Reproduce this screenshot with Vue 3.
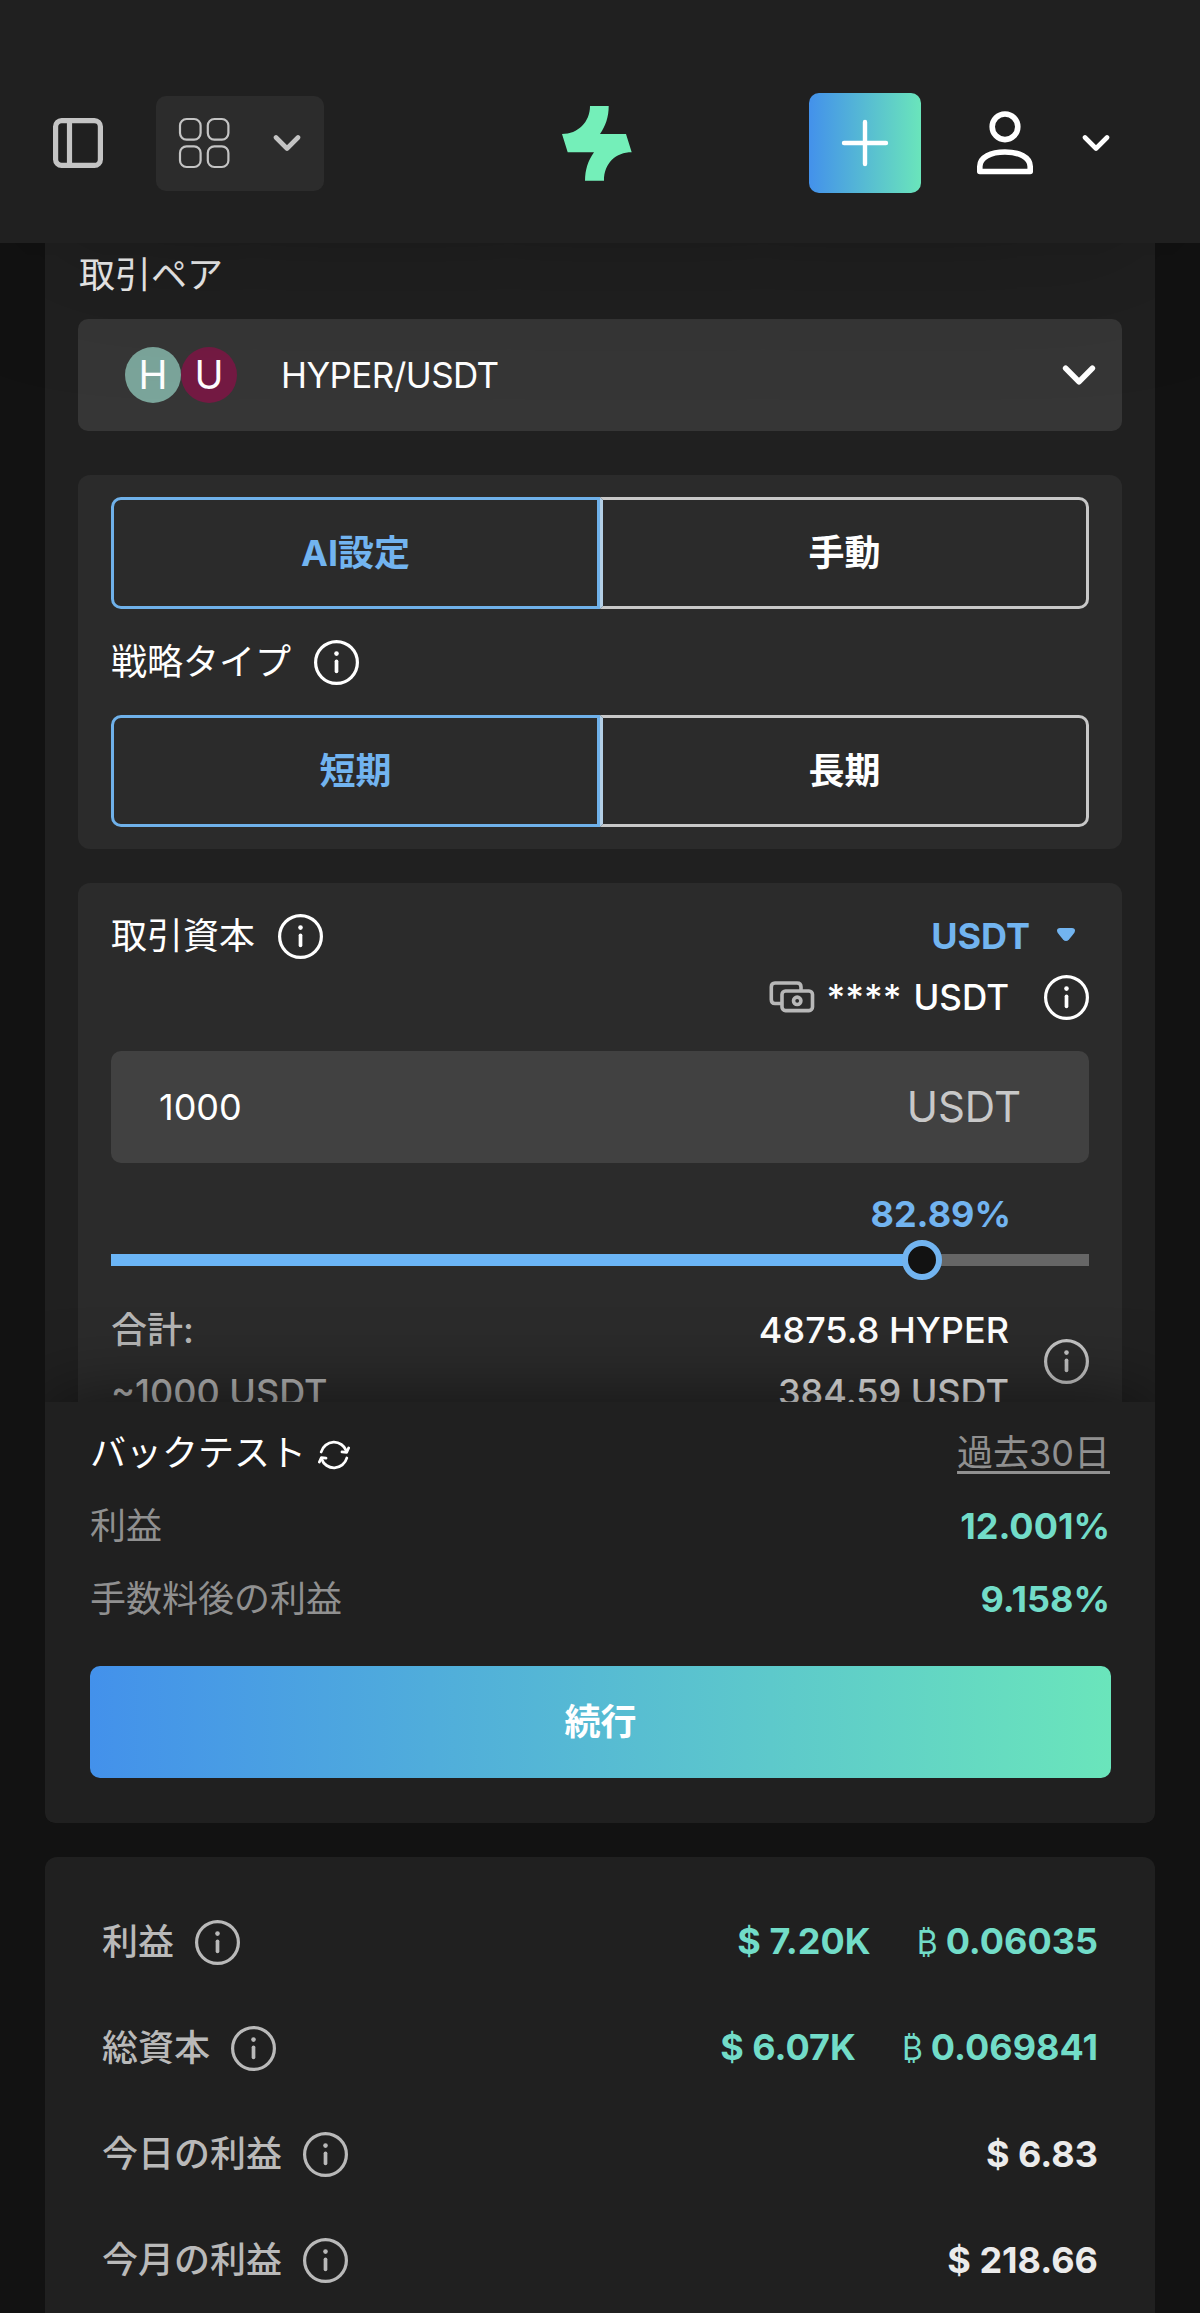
<template>
  <div class="page">
    <svg class="sprite" aria-hidden="true">
      <symbol id="info" viewBox="0 0 45 45">
        <circle cx="22.5" cy="22.5" r="20.9" fill="none" stroke="currentColor" stroke-width="3.2" />
        <circle cx="22.5" cy="13.6" r="2.3" fill="currentColor" />
        <path d="M22.5 21.3v10" fill="none" stroke="currentColor" stroke-width="3.7" stroke-linecap="round" />
      </symbol>
      <symbol id="chevron" viewBox="0 0 28 18">
        <path d="M3 3.5l11 11 11-11" fill="none" stroke="currentColor" stroke-width="4.6" stroke-linecap="round" stroke-linejoin="round" />
      </symbol>
    </svg>

    <header class="header">
      <button class="icon-button sidebar-button">
        <svg width="50" height="50" viewBox="0 0 50 50" fill="none" stroke="currentColor" stroke-width="5.2">
          <rect x="2.6" y="2.6" width="44.8" height="44.8" rx="6" />
          <path d="M16.5 3v44" />
        </svg>
      </button>
      <button class="icon-button grid-button">
        <svg width="52" height="52" viewBox="0 0 52 52" fill="none" stroke="currentColor" stroke-width="2.2">
          <rect x="2" y="2" width="20.6" height="20.6" rx="6.5" />
          <rect x="29.8" y="2" width="20.6" height="20.6" rx="6.5" />
          <rect x="2" y="29.4" width="20.6" height="20.6" rx="6.5" />
          <rect x="29.8" y="29.4" width="20.6" height="20.6" rx="6.5" />
        </svg>
        <svg class="chevron"><use href="#chevron" /></svg>
      </button>
      <svg class="logo" width="70" height="75" viewBox="0 0 70 75">
        <path fill="#74efb9" d="M28 0H46.7C46.7 11 43.6 20 38 28H64L69.7 46.3C54 46.3 42 57 42 74.7H23C23 64 26 54.500 32 46.300H5.700L0 28C16 28 28 16 28 0Z" />
      </svg>
      <button class="icon-button plus-button">
        <svg width="48" height="48" viewBox="0 0 48 48" stroke="currentColor" stroke-width="4.4" stroke-linecap="round">
          <path d="M24 3v42M3 24h42" />
        </svg>
      </button>
      <button class="icon-button user-button">
        <svg width="56" height="64" viewBox="0 0 56 64" fill="none" stroke="currentColor" stroke-width="5.600" stroke-linejoin="round">
          <circle cx="28" cy="15.8" r="12.8" />
          <path d="M2.800 60.500V55.500C2.800 46 14 41 28 41S53.200 46 53.200 55.500V60.500Z" />
        </svg>
        <svg class="chevron"><use href="#chevron" /></svg>
      </button>
    </header>

    <main class="form-card">
      <div class="form-body">
        <div class="pair-label">取引ペア</div>
        <div class="select">
          <span class="coin coin-h">H</span>
          <span class="coin coin-u">U</span>
          <span class="pair-name">HYPER/USDT</span>
          <svg class="select-arrow"><use href="#chevron" /></svg>
        </div>

        <section class="panel settings">
          <div class="toggle">
            <button v-for="mode in modes" :key="mode" :class="{ active: mode === selectedMode }" @click="selectedMode = mode">{{ mode }}</button>
          </div>
          <div class="label-row">
            <span>戦略タイプ</span>
            <svg class="info"><use href="#info" /></svg>
          </div>
          <div class="toggle">
            <button v-for="term in terms" :key="term" :class="{ active: term === selectedTerm }" @click="selectedTerm = term">{{ term }}</button>
          </div>
        </section>

        <section class="panel capital">
          <div class="capital-head">
            <span>取引資本</span>
            <svg class="info"><use href="#info" /></svg>
            <span class="currency">USDT</span>
            <svg class="caret" width="20" height="15" viewBox="0 0 20 15">
              <path d="M4 1H16Q20.500 1.500 18.200 6L13 12.500Q10 15.500 7 12.500L1.800 6Q-.5 1.500 4 1Z" fill="currentColor" />
            </svg>
          </div>
          <div class="balance">
            <svg class="cash" width="46" height="32" viewBox="0 0 46 32" fill="none" stroke="currentColor" stroke-width="3.600">
              <path d="M12 22.500H6Q2.300 22.500 2.300 18.500V6Q2.300 2 6 2H28Q32 2 32 6V9" />
              <rect x="13" y="10" width="30.500" height="19.600" rx="3.500" />
              <circle cx="28.200" cy="19.800" r="3.700" />
            </svg>
            <span class="stars">****</span>
            <span class="balance-unit">USDT</span>
            <svg class="info"><use href="#info" /></svg>
          </div>
          <div class="amount">
            <span class="amount-value">{{ amount }}</span>
            <span class="amount-unit">USDT</span>
          </div>
          <div class="percent">{{ percent }}%</div>
          <div class="slider">
            <div class="slider-fill" :style="{ width: percent + '%' }"></div>
            <div class="slider-thumb" :style="{ left: percent + '%' }"></div>
          </div>
          <div class="total">
            <div class="total-left">
              <div>合計:</div>
              <div class="total-sum">~1000 USDT</div>
            </div>
            <div class="total-right">
              <div class="total-hyper">4875.8 HYPER</div>
              <div class="total-usdt">384.59 USDT</div>
            </div>
            <svg class="info"><use href="#info" /></svg>
          </div>
        </section>
      </div>

      <footer class="backtest">
        <div class="backtest-row">
          <span class="backtest-title">バックテスト</span>
          <svg class="refresh" width="32" height="32" viewBox="0 0 32 32" fill="none" stroke="currentColor" stroke-width="2.800" stroke-linecap="round" stroke-linejoin="round">
            <path d="M3.200 13A13.200 13.200 0 0 1 28.400 12M28.800 19A13.200 13.200 0 0 1 3.600 20" />
            <path d="M24 12.800L28.700 13.300 30.600 9M8 19.200L3.300 18.700 1.400 23" />
          </svg>
          <a class="period">過去30日</a>
        </div>
        <div class="backtest-row">
          <span>利益</span>
          <b class="gain-1">12.001%</b>
        </div>
        <div class="backtest-row">
          <span>手数料後の利益</span>
          <b class="gain-2">9.158%</b>
        </div>
        <button class="continue">続行</button>
      </footer>
    </main>

    <section class="stats">
      <div v-for="row in stats" :key="row.label" class="stat">
        <span>{{ row.label }}</span>
        <svg class="info"><use href="#info" /></svg>
        <div class="stat-values" :class="{ green: row.btc }">
          <b>$ {{ row.usd }}</b>
          <b v-if="row.btc" class="btc"><i>₿</i>{{ row.btc }}</b>
        </div>
      </div>
    </section>
  </div>
</template>

<script setup>
import { ref } from 'vue';

const modes = ['AI設定', '手動'];
const terms = ['短期', '長期'];
const selectedMode = ref('AI設定');
const selectedTerm = ref('短期');

const amount = ref(1000);
const percent = ref(82.89);

const stats = [
  { label: '利益', usd: '7.20K', btc: '0.06035' },
  { label: '総資本', usd: '6.07K', btc: '0.069841' },
  { label: '今日の利益', usd: '6.83' },
  { label: '今月の利益', usd: '218.66' },
];
</script>

<style>
body {
  margin: 0;
  background: #121212;
}
</style>

<style scoped>
.page {
  width: 1200px;
  height: 2313px;
  overflow: hidden;
  background: #121212;
  color: #fff;
  font-family: Inter, "Noto Sans CJK JP", sans-serif;
  font-size: 36px;
  line-height: 54px;
}

.page * {
  box-sizing: border-box;
}

.sprite {
  display: none;
}

button {
  margin: 0;
  padding: 0;
  border: none;
  background: none;
  color: inherit;
  font: inherit;
}

svg {
  display: block;
  flex: none;
}

.info {
  width: 45px;
  height: 45px;
}

.chevron {
  width: 28px;
  height: 18px;
}

/* Header */
.header {
  position: relative;
  z-index: 2;
  display: flex;
  align-items: center;
  height: 243px;
  padding: 43px 90px 0 53px;
  background: #202020;
  box-shadow: 0 20px 160px -30px rgba(0, 0, 0, 0.3);
}

.icon-button {
  display: flex;
  align-items: center;
}

.sidebar-button {
  color: #c4c4c4;
}

.grid-button {
  justify-content: space-between;
  width: 168px;
  height: 95px;
  margin-left: 53px;
  padding: 0 23px 0 22px;
  border-radius: 10px;
  background: #2c2c2c;
  color: #c4c4c4;
}

.logo {
  margin-left: 238px;
}

.plus-button {
  justify-content: center;
  width: 112px;
  height: 100px;
  margin-left: 177px;
  border-radius: 10px;
  background: linear-gradient(90deg, #4391eb, #6ae5bb);
}

.user-button {
  gap: 49px;
  margin-left: 56px;
}

/* Form */
.form-card {
  width: 1110px;
  margin: 0 45px;
  border-radius: 0 0 10px 10px;
  background: #202020;
}

.form-body {
  height: 1159px;
  padding: 5px 33px 0;
  overflow: hidden;
}

.pair-label {
  padding-left: 1px;
  color: #f0f0f0;
}

.select {
  display: flex;
  align-items: center;
  height: 112px;
  margin-top: 17px;
  padding: 0 26px 0 47px;
  border-radius: 10px;
  background: #363636;
}

.coin {
  width: 56px;
  height: 56px;
  border-radius: 50%;
  font-size: 39px;
  line-height: 56px;
  text-align: center;
}

.coin-h {
  background: #7ba59b;
}

.coin-u {
  background: #741a43;
}

.pair-name {
  margin-left: 44px;
  font-size: 35px;
  letter-spacing: -0.6px;
}

.select-arrow {
  width: 34px;
  height: 22px;
  margin-left: auto;
}

.panel {
  border-radius: 12px;
  background: #2b2b2b;
}

.settings {
  margin-top: 44px;
  padding: 22px 33px;
}

.toggle {
  display: flex;
}

.toggle button {
  width: 489px;
  height: 112px;
  border: 3px solid #c8c8c8;
  font-weight: 700;
  line-height: 106px;
  text-align: center;
}

.toggle button:first-child {
  border-radius: 10px 0 0 10px;
}

.toggle button:last-child {
  border-left-color: #b4cfe6;
  border-radius: 0 10px 10px 0;
}

.toggle button.active {
  border-color: #6fb1ea;
  color: #72b4f0;
}

.label-row {
  display: flex;
  align-items: center;
  gap: 23px;
  height: 106px;
}

.capital {
  height: 560px;
  margin-top: 34px;
  padding: 28px 33px 0;
}

.capital-head {
  display: flex;
  align-items: center;
  height: 50px;
}

.capital-head .info {
  margin-left: 23px;
}

.currency {
  margin-left: auto;
  color: #72b4f0;
  font-weight: 700;
}

.caret {
  margin: 0 13px 4px 26px;
  color: #72b4f0;
}

.balance {
  display: flex;
  align-items: center;
  justify-content: flex-end;
  height: 50px;
  margin-top: 11px;
}

.cash {
  color: #b8b8b8;
}

.stars {
  margin-left: 11px;
  font-weight: 500;
}

.balance-unit {
  margin-left: 12px;
  font-size: 35px;
  font-weight: 500;
}

.balance .info {
  margin-left: 35px;
}

.amount {
  display: flex;
  align-items: center;
  justify-content: space-between;
  height: 112px;
  margin-top: 29px;
  padding: 0 68px 0 48px;
  border-radius: 10px;
  background: #414141;
}

.amount-value {
  font-size: 36px;
}

.amount-unit {
  color: #c8c8c8;
  font-size: 42px;
}

.percent {
  margin: 24px 78px 0 0;
  color: #72b4f0;
  font-weight: 700;
  text-align: right;
}

.slider {
  position: relative;
  height: 12px;
  margin-top: 13px;
  background: #666;
}

.slider-fill {
  height: 12px;
  background: #6bb5f6;
}

.slider-thumb {
  position: absolute;
  top: -14px;
  width: 40px;
  height: 40px;
  margin-left: -20px;
  border: 6px solid #72b4f0;
  border-radius: 50%;
  background: #121212;
}

.total {
  display: flex;
  align-items: center;
  margin-top: 34px;
  line-height: 61.5px;
}

.total-left {
  color: #b5b5b5;
  font-weight: 500;
}

.total-right {
  margin-left: auto;
  font-weight: 500;
  text-align: right;
}

.total-usdt {
  color: #e6e6e6;
}

.total .info {
  margin-left: 35px;
  color: #c4c4c4;
}

/* Backtest block covers the scrolled form */
.backtest {
  position: relative;
  height: 421px;
  padding: 14px 45px 0;
  border-radius: 0 0 10px 10px;
  background: #202020;
  box-shadow: 0 0 80px rgba(0, 0, 0, 0.6);
  clip-path: inset(-120px 0 0 0 round 0 0 10px 10px);
}

.backtest-row {
  display: flex;
  align-items: center;
  height: 73px;
  color: #909090;
}

.backtest-row b {
  margin-left: auto;
  color: #72dcc8;
}

.backtest-title {
  color: #fff;
}

.refresh {
  margin: 4px 0 0 12px;
  color: #fff;
}

.period {
  margin-left: auto;
  text-decoration: underline;
  text-decoration-thickness: 3px;
  text-underline-offset: 5px;
}

.continue {
  display: block;
  width: 1021px;
  height: 112px;
  margin-top: 31px;
  border-radius: 10px;
  background: linear-gradient(90deg, #4391eb, #6ae5bb);
  font-weight: 700;
  line-height: 108px;
}

/* Stats */
.stats {
  width: 1110px;
  height: 470px;
  margin: 34px 45px 0;
  padding: 32px 57px 0;
  border-radius: 12px 12px 0 0;
  background: #202020;
}

.stat {
  display: flex;
  align-items: center;
  height: 106px;
  color: #b9b9b9;
  font-weight: 500;
}

.stat .info {
  margin-left: 21px;
}

.stat-values {
  display: flex;
  gap: 46px;
  margin-left: auto;
  color: #ebebeb;
}

.stat-values.green {
  color: #72dcc8;
}

.btc i {
  margin-right: 8px;
  font-size: 32px;
  font-style: normal;
  font-weight: 400;
}
</style>
